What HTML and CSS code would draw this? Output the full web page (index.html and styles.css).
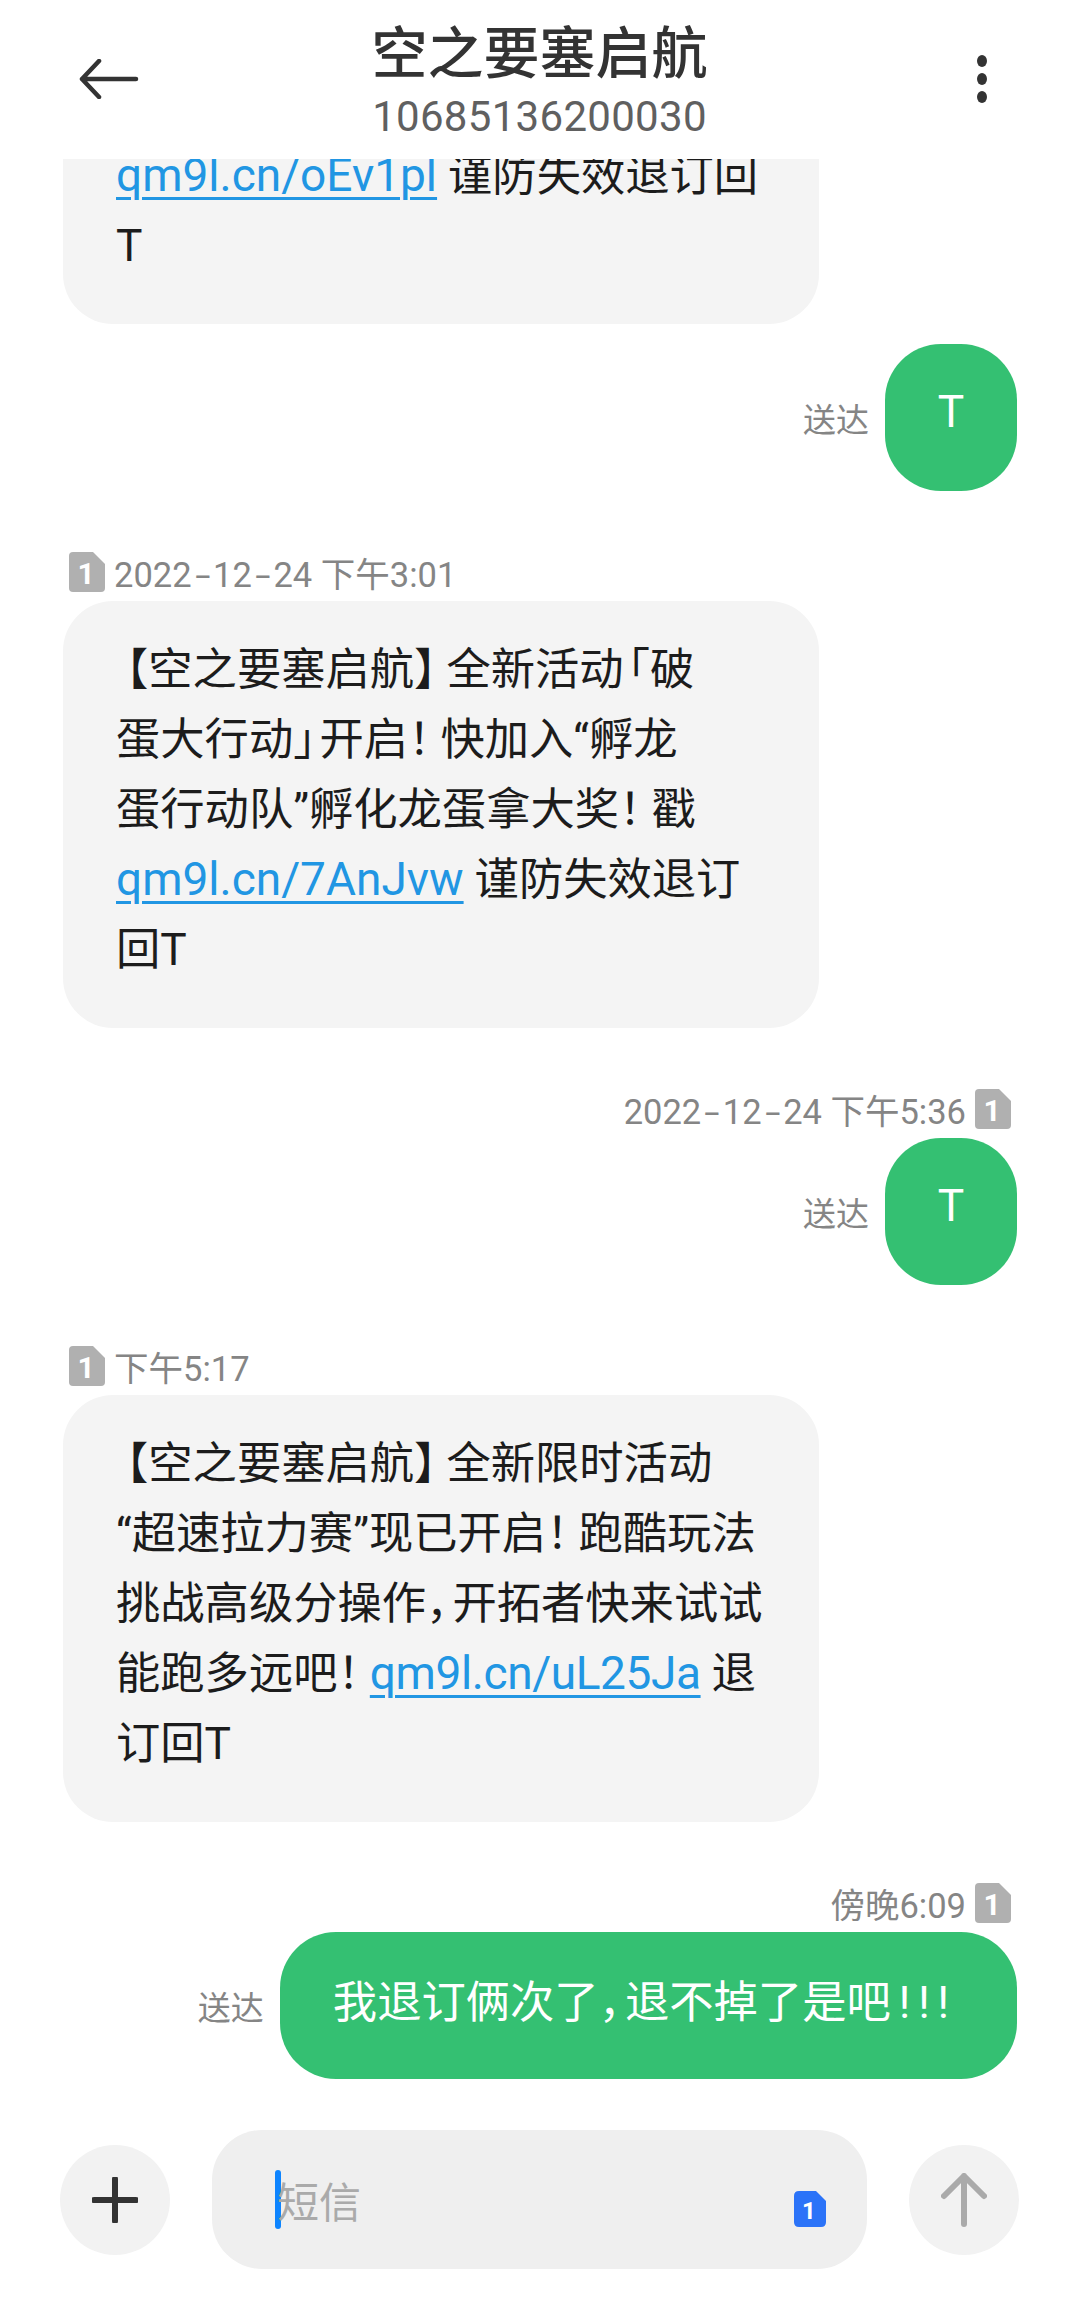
FILE: index.html
```html
<!DOCTYPE html>
<html lang="zh-CN">
<head>
  <meta charset="UTF-8">
  <title>空之要塞启航</title>
  <link rel="stylesheet" href="styles.css">
</head>
<body>

  <header class="topbar">
    <svg class="back-icon" width="60" height="40" viewBox="0 0 60 40">
      <path d="M20 2 L3 20 L20 38 M3 20 H57" fill="none" stroke="#333" stroke-width="4.5" stroke-linecap="round" stroke-linejoin="round"/>
    </svg>
    <div class="contact">
      <div class="contact-name">空之要塞启航</div>
      <div class="contact-number">10685136200030</div>
    </div>
    <svg class="more-icon" width="12" height="48" viewBox="0 0 12 48">
      <ellipse cx="6" cy="6" rx="5" ry="6" fill="#333"/>
      <ellipse cx="6" cy="24" rx="5" ry="6" fill="#333"/>
      <ellipse cx="6" cy="42" rx="5" ry="6" fill="#333"/>
    </svg>
  </header>

  <main class="thread">
    <div class="bubble-in first-bubble">
      <a class="link">qm9l.cn/oEv1pl</a> 谨防失效退订回<br>T
    </div>

    <div class="row-out first-out">
      <span class="status">送达</span>
      <div class="bubble-out short">T</div>
    </div>

    <div class="meta">
      <svg class="sim" width="36" height="40" viewBox="0 0 36 40"><path d="M4 0 H24 L36 12 V36 Q36 40 32 40 H4 Q0 40 0 36 V4 Q0 0 4 0 Z" fill="#b0b0b0"/><text x="17" y="32" class="sim-num">1</text></svg>
      <span>2022<span class="dash">-</span>12<span class="dash">-</span>24 下午3:01</span>
    </div>
    <div class="bubble-in">
      <span class="open">【</span>空之要塞启航<span class="p">】</span>全新活动<span class="open-n">「</span>破<br>
      蛋大行动<span class="pn">」</span>开启<span class="p">！</span>快加入“孵龙<br>
      蛋行动队”孵化龙蛋拿大奖<span class="p">！</span>戳<br>
      <a class="link">qm9l.cn/7AnJvw</a> 谨防失效退订<br>
      回T
    </div>

    <div class="meta meta-out">
      <span>2022<span class="dash">-</span>12<span class="dash">-</span>24 下午5:36</span>
      <svg class="sim" width="36" height="40" viewBox="0 0 36 40"><path d="M4 0 H24 L36 12 V36 Q36 40 32 40 H4 Q0 40 0 36 V4 Q0 0 4 0 Z" fill="#b0b0b0"/><text x="17" y="32" class="sim-num">1</text></svg>
    </div>
    <div class="row-out">
      <span class="status">送达</span>
      <div class="bubble-out short">T</div>
    </div>

    <div class="meta">
      <svg class="sim" width="36" height="40" viewBox="0 0 36 40"><path d="M4 0 H24 L36 12 V36 Q36 40 32 40 H4 Q0 40 0 36 V4 Q0 0 4 0 Z" fill="#b0b0b0"/><text x="17" y="32" class="sim-num">1</text></svg>
      <span>下午5:17</span>
    </div>
    <div class="bubble-in">
      <span class="open">【</span>空之要塞启航<span class="p">】</span>全新限时活动<br>
      “超速拉力赛”现已开启<span class="p">！</span>跑酷玩法<br>
      挑战高级分操作<span class="pn">，</span>开拓者快来试试<br>
      能跑多远吧<span class="p">！</span><a class="link link-tight">qm9l.cn/uL25Ja</a> 退<br>
      订回T
    </div>

    <div class="meta meta-out">
      <span>傍晚6:09</span>
      <svg class="sim" width="36" height="40" viewBox="0 0 36 40"><path d="M4 0 H24 L36 12 V36 Q36 40 32 40 H4 Q0 40 0 36 V4 Q0 0 4 0 Z" fill="#b0b0b0"/><text x="17" y="32" class="sim-num">1</text></svg>
    </div>
    <div class="row-out">
      <span class="status">送达</span>
      <div class="bubble-out"><span>我退订俩次了<span class="pn">，</span>退不掉了是吧<span class="bangs">!!!</span></span></div>
    </div>
  </main>

  <footer class="composer">
    <div class="round-btn">
      <svg width="46" height="46" viewBox="0 0 46 46">
        <path d="M23 2 V44 M2 23 H44" stroke="#333" stroke-width="6" stroke-linecap="round"/>
      </svg>
    </div>
    <div class="input">
      <span class="caret"></span>
      <span class="placeholder">短信</span>
      <svg class="sim-blue" width="32" height="36" viewBox="0 0 32 36"><path d="M5 0 H22 L32 10 V31 Q32 36 27 36 H5 Q0 36 0 31 V5 Q0 0 5 0 Z" fill="#2b73f8"/><text x="15" y="28" class="sim-num-small">1</text></svg>
    </div>
    <div class="round-btn">
      <svg width="46" height="54" viewBox="0 0 46 54">
        <path d="M3 23 L23 3 L43 23 M23 3 V51" fill="none" stroke="#aaa" stroke-width="6" stroke-linecap="round" stroke-linejoin="round"/>
      </svg>
    </div>
  </footer>

</body>
</html>
```

FILE: styles.css
```css
html, body {
  margin: 0;
  height: 2319px;
  overflow: hidden;
}

body {
  width: 1080px;
  display: flex;
  flex-direction: column;
  background-color: white;
  font-family: Roboto, "Noto Sans CJK SC", sans-serif;
  color: #1c1c1c;
}

.topbar {
  height: 159px;
  flex: none;
  display: grid;
  grid-template-columns: 1fr auto 1fr;
  align-items: center;
  padding: 0 92px 0 79px;
  box-sizing: border-box;
  background-color: white;
  position: relative;
  z-index: 1;
}

.back-icon {
  margin-bottom: 2px;
}

.more-icon {
  margin-bottom: 2px;
  justify-self: end;
}

.contact {
  text-align: center;
  padding-top: 4px;
  transform: translateX(6px);
}

.contact-name {
  font-size: 56px;
  font-weight: 500;
  line-height: 70px;
  color: #333;
}

.contact-number {
  font-size: 42px;
  line-height: 56px;
  letter-spacing: 0.3px;
  color: #606060;
}

.thread {
  flex: 1;
  min-height: 0;
  overflow: hidden;
  display: flex;
  flex-direction: column;
  justify-content: flex-end;
  padding: 0 63px 51px;
}

.bubble-in {
  flex: none;
  width: 756px;
  box-sizing: border-box;
  padding: 34px 20px 43px 53px;
  background-color: #f4f4f4;
  border-radius: 50px;
  font-size: 44.3px;
  line-height: 70px;
  white-space: nowrap;
}

.first-bubble {
  padding-top: 100px;
}

/* full-width punctuation sits tighter in the phone's font */
.p {
  letter-spacing: -12px;
}

.pn {
  letter-spacing: -18px;
}

/* opening marks have their ink on the right, so pull them left instead */
.open {
  margin-left: -12px;
}

.open-n {
  margin-left: -18px;
}

.link {
  font-size: 46px;
  line-height: 1;
  color: #2196e3;
  text-decoration: underline;
  text-decoration-thickness: 3px;
  text-underline-offset: 6px;
}

.link-tight {
  letter-spacing: -0.4px;
}

.meta {
  flex: none;
  display: flex;
  align-items: center;
  gap: 9px;
  height: 40px;
  margin: 61px 0 9px 6px;
  font-size: 34.5px;
  color: #858585;
  white-space: nowrap;
}

.meta-out {
  justify-content: flex-end;
  margin-left: 0;
  margin-right: 6px;
}

/* the date dash is wider than a plain hyphen here */
.dash {
  display: inline-block;
  margin: 0 6px;
  transform: scaleX(1.6);
}

.sim-num {
  font-family: Roboto, sans-serif;
  font-size: 30px;
  font-weight: 700;
  fill: white;
  text-anchor: middle;
}

.row-out {
  flex: none;
  display: flex;
  justify-content: flex-end;
  align-items: center;
  gap: 16px;
}

.first-out {
  margin-top: 20px;
}

.status {
  font-size: 33px;
  color: #858585;
}

.bubble-out {
  height: 147px;
  display: flex;
  align-items: center;
  box-sizing: border-box;
  padding: 0 60px 14px 53px;
  background-color: #34c072;
  border-radius: 56px;
  color: white;
  font-size: 44.3px;
  white-space: nowrap;
}

.bubble-out.short {
  width: 132px;
  padding: 0 0 11px;
  justify-content: center;
}

.bangs {
  letter-spacing: 8px;
  margin-left: 8px;
}

.composer {
  flex: none;
  height: 189px;
  box-sizing: border-box;
  padding: 0 61px 50px 60px;
  display: flex;
  align-items: center;
  gap: 42px;
}

.round-btn {
  width: 110px;
  height: 110px;
  flex: none;
  border-radius: 50%;
  background-color: #f2f2f2;
  display: flex;
  align-items: center;
  justify-content: center;
}

.input {
  flex: 1;
  height: 139px;
  display: flex;
  align-items: center;
  padding: 0 41px 0 63px;
  background-color: #efefef;
  border-radius: 50px;
}

.caret {
  width: 6px;
  height: 59px;
  margin-right: -4px;
  background-color: #0d84ff;
  border-radius: 3px;
}

.placeholder {
  flex: 1;
  font-size: 42px;
  color: #aaa;
}

.sim-blue {
  margin-top: 18px;
}

.sim-num-small {
  font-family: Roboto, sans-serif;
  font-size: 24px;
  font-weight: 700;
  fill: white;
  text-anchor: middle;
}
```
